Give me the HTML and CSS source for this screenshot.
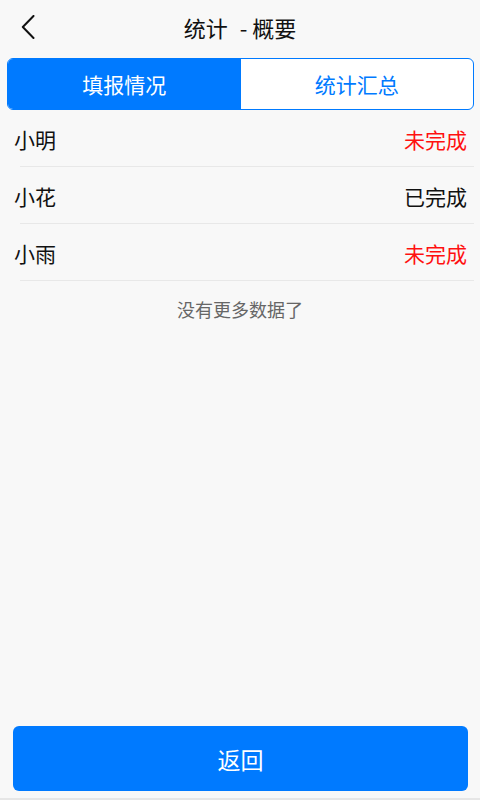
FILE: index.html
```html
<!DOCTYPE html>
<html lang="zh-CN">
<head>
<meta charset="utf-8">
<title>统计 - 概要</title>
<link rel="stylesheet" href="styles.css">
</head>
<body>
<div class="app">
  <header class="header">
    <span class="back" aria-label="返回">
      <svg width="14" height="24" viewBox="0 0 14 24"><path d="M12.5 1 L1.8 12 L12.5 23" fill="none" stroke="#111" stroke-width="2" stroke-linecap="round" stroke-linejoin="round"/></svg>
    </span>
    <h1 class="title">统计<span class="dash">-</span>概要</h1>
  </header>
  <div class="tabs">
    <div class="tab active">填报情况</div>
    <div class="tab">统计汇总</div>
  </div>
  <ul class="list">
    <li class="row"><span class="name">小明</span><span class="status todo">未完成</span></li>
    <li class="row"><span class="name">小花</span><span class="status">已完成</span></li>
    <li class="row"><span class="name">小雨</span><span class="status todo">未完成</span></li>
  </ul>
  <div class="nomore">没有更多数据了</div>
  <div class="spacer"></div>
  <div class="footer">
    <button class="btn">返回</button>
  </div>
</div>
</body>
</html>
```
FILE: styles.css
```css
* { box-sizing: border-box; }
html, body { margin: 0; padding: 0; }
body {
  background: #f8f8f8;
  font-family: "Noto Sans CJK SC", "Noto Sans", sans-serif;
  color: #111;
}
.app {
  height: 800px;
  display: flex;
  flex-direction: column;
  border-bottom: 2px solid #e6e6e6;
}
.header {
  height: 54px;
  position: relative;
  display: flex;
  align-items: center;
  justify-content: center;
}
.back {
  position: absolute;
  left: 21px;
  top: 15px;
  display: block;
  width: 14px;
  height: 24px;
}
.back svg { display: block; }
.title {
  margin: 0;
  font-size: 22px;
  font-weight: 400;
  line-height: 1;
  color: #111;
}
.dash {
  display: inline-block;
  margin: 0 5px 0 12px;
}
.tabs {
  margin: 4px 6px 0 7px;
  height: 52px;
  border: 1.5px solid #007aff;
  border-radius: 6px;
  overflow: hidden;
  display: flex;
  background: #fff;
}
.tab {
  flex: 1;
  display: flex;
  align-items: center;
  justify-content: center;
  font-size: 21px;
  color: #007aff;
}
.tab.active {
  background: #007aff;
  color: #fff;
}
.list {
  list-style: none;
  margin: 0;
  padding: 0;
}
.row {
  height: 57px;
  display: flex;
  align-items: center;
  justify-content: space-between;
  padding: 0 13px 0 14px;
  font-size: 21px;
  background-image: linear-gradient(#e8e8e8, #e8e8e8);
  background-repeat: no-repeat;
  background-size: calc(100% - 26px) 1px;
  background-position: 20px 100%;
}
.status { color: #111; }
.status.todo { color: #ff1010; }
.nomore {
  margin-top: 18px;
  text-align: center;
  font-size: 18px;
  line-height: 20px;
  color: #666;
}
.spacer { flex: 1; }
.footer {
  padding: 0 12px 7px 13px;
}
.btn {
  display: block;
  width: 100%;
  height: 65px;
  border: 0;
  border-radius: 6px;
  background: #007aff;
  color: #fff;
  font-family: inherit;
  font-size: 23px;
  padding: 0;
}
```
